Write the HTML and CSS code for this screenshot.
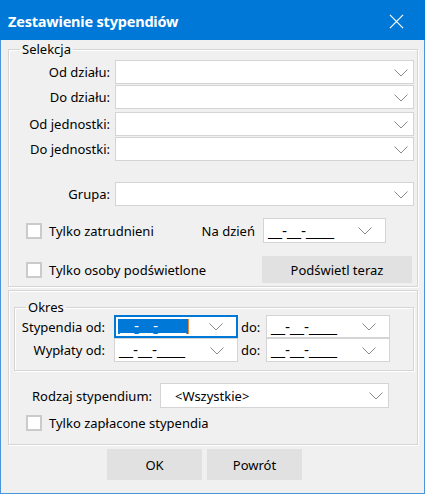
FILE: index.html
```html
<!DOCTYPE html>
<html lang="pl">
<head>
    <meta charset="UTF-8">
    <title>Zestawienie stypendiów</title>
    <link rel="stylesheet" href="styles.css">
</head>
<body>
    <div class="dialog">
        <div class="titlebar">
            <span class="title">Zestawienie stypendiów</span>
            <svg class="close" width="16" height="16" viewBox="0 0 16 16">
                <path d="M1 1 L15 15 M15 1 L1 15" stroke="#fff" stroke-width="1.3" fill="none"/>
            </svg>
        </div>

        <fieldset class="group selekcja">
            <legend>Selekcja</legend>
            <div class="row r1">
                <span class="lbl">Od działu:</span>
                <div class="combo wide"><span></span><svg class="arrow" width="14" height="8" viewBox="0 0 14 8"><path d="M0.5 0.5 L7 7 L13.5 0.5" stroke="#8a8a8a" fill="none"/></svg></div>
            </div>
            <div class="row r2">
                <span class="lbl">Do działu:</span>
                <div class="combo wide"><span></span><svg class="arrow" width="14" height="8" viewBox="0 0 14 8"><path d="M0.5 0.5 L7 7 L13.5 0.5" stroke="#8a8a8a" fill="none"/></svg></div>
            </div>
            <div class="row r3">
                <span class="lbl">Od jednostki:</span>
                <div class="combo wide"><span></span><svg class="arrow" width="14" height="8" viewBox="0 0 14 8"><path d="M0.5 0.5 L7 7 L13.5 0.5" stroke="#8a8a8a" fill="none"/></svg></div>
            </div>
            <div class="row r2">
                <span class="lbl">Do jednostki:</span>
                <div class="combo wide"><span></span><svg class="arrow" width="14" height="8" viewBox="0 0 14 8"><path d="M0.5 0.5 L7 7 L13.5 0.5" stroke="#8a8a8a" fill="none"/></svg></div>
            </div>
            <div class="row r5">
                <span class="lbl">Grupa:</span>
                <div class="combo wide"><span></span><svg class="arrow" width="14" height="8" viewBox="0 0 14 8"><path d="M0.5 0.5 L7 7 L13.5 0.5" stroke="#8a8a8a" fill="none"/></svg></div>
            </div>
            <div class="check-row cr1">
                <label class="check"><span class="box"></span>Tylko zatrudnieni</label>
                <span class="na-dzien">Na dzień</span>
                <div class="combo date nd"><span class="mask">__-__-____</span><svg class="arrow" width="14" height="8" viewBox="0 0 14 8"><path d="M0.5 0.5 L7 7 L13.5 0.5" stroke="#8a8a8a" fill="none"/></svg></div>
            </div>
            <div class="check-row cr2">
                <label class="check"><span class="box"></span>Tylko osoby podświetlone</label>
                <button class="btn highlight">Podświetl teraz</button>
            </div>
        </fieldset>

        <div class="group lower">
            <fieldset class="group okres">
                <legend>Okres</legend>
                <div class="orow o1">
                    <span class="olbl">Stypendia od:</span>
                    <div class="combo date focused"><span class="mask sel">__-__-____</span><i class="caret"></i><svg class="arrow" width="14" height="8" viewBox="0 0 14 8"><path d="M0.5 0.5 L7 7 L13.5 0.5" stroke="#8a8a8a" fill="none"/></svg></div>
                    <span class="do">do:</span>
                    <div class="combo date"><span class="mask">__-__-____</span><svg class="arrow" width="14" height="8" viewBox="0 0 14 8"><path d="M0.5 0.5 L7 7 L13.5 0.5" stroke="#8a8a8a" fill="none"/></svg></div>
                </div>
                <div class="orow o2">
                    <span class="olbl">Wypłaty od:</span>
                    <div class="combo date"><span class="mask">__-__-____</span><svg class="arrow" width="14" height="8" viewBox="0 0 14 8"><path d="M0.5 0.5 L7 7 L13.5 0.5" stroke="#8a8a8a" fill="none"/></svg></div>
                    <span class="do">do:</span>
                    <div class="combo date"><span class="mask">__-__-____</span><svg class="arrow" width="14" height="8" viewBox="0 0 14 8"><path d="M0.5 0.5 L7 7 L13.5 0.5" stroke="#8a8a8a" fill="none"/></svg></div>
                </div>
            </fieldset>
            <div class="rodzaj">
                <span class="rlbl">Rodzaj stypendium:</span>
                <div class="combo rcombo"><span>&lt;Wszystkie&gt;</span><svg class="arrow" width="14" height="8" viewBox="0 0 14 8"><path d="M0.5 0.5 L7 7 L13.5 0.5" stroke="#8a8a8a" fill="none"/></svg></div>
            </div>
            <label class="check paid"><span class="box"></span>Tylko zapłacone stypendia</label>
        </div>

        <div class="buttons">
            <button class="btn">OK</button>
            <button class="btn">Powrót</button>
        </div>
    </div>
</body>
</html>
```

FILE: styles.css
```css
body {
    margin: 0;
    font-family: "Noto Sans", "Open Sans", sans-serif;
    font-size: 13px;
    color: #000;
}
.dialog {
    width: 425px;
    height: 494px;
    box-sizing: border-box;
    background-color: #f0f0f0;
    border: 1px solid #4b95dc;
    border-top: none;
}
.titlebar {
    height: 40px;
    margin: 0 -1px;
    background-color: #0078d7;
    color: #fff;
    display: flex;
    align-items: center;
    justify-content: space-between;
    padding: 0 21px 0 8px;
}
.title {
    font-weight: bold;
    font-size: 14.5px;
    letter-spacing: -0.2px;
    margin-top: 1px;
}
.close {
    width: 15px;
    height: 15px;
    margin-top: 2px;
}

.group {
    border: 1px solid #d5d5d5;
    box-shadow: inset 1px 1px 0 #fff, 1px 1px 0 #fff;
    box-sizing: border-box;
}
fieldset.group {
    margin: 0;
    padding: 0;
    min-width: 0;
}
legend {
    padding: 0 2px;
    margin-left: 11px;
    line-height: 16px;
    height: 16px;
}

.selekcja {
    width: 410px;
    margin: 1px 0 0 7px !important;
    padding: 0 0 3px 0 !important;
}
.row {
    display: flex;
    align-items: center;
    height: 24px;
}
.r1 { margin-top: 3px; }
.r2 { margin-top: 1px; }
.r3 { margin-top: 3px; }
.r5 { margin-top: 21px; }
.lbl {
    width: 101px;
    text-align: right;
    margin-right: 5px;
    white-space: nowrap;
}

.combo {
    box-sizing: border-box;
    height: 24px;
    background-color: #fff;
    border: 1px solid #d4d4d4;
    display: flex;
    align-items: center;
    justify-content: space-between;
    padding: 0 5px 0 4px;
    white-space: nowrap;
}
.combo.wide {
    width: 299px;
}
.combo.date {
    padding-right: 13px;
}
.mask {
    font-family: "DejaVu Sans", sans-serif;
    font-size: 14px;
    line-height: 16px;
}
.arrow {
    flex-shrink: 0;
    margin-top: 1px;
}

.check-row {
    display: flex;
    align-items: center;
    padding-left: 17px;
}
.cr1 {
    margin-top: 12px;
    height: 25px;
}
.cr2 {
    margin-top: 13px;
    height: 27px;
}
.check {
    display: flex;
    align-items: center;
    flex: 1;
    white-space: nowrap;
}
.box {
    width: 16px;
    height: 16px;
    box-sizing: border-box;
    border: 2px solid #cbcbcb;
    background-color: #fff;
    margin-right: 7px;
}
.na-dzien {
    margin-right: 8px;
}
.combo.nd {
    width: 123px;
    height: 25px;
    margin-right: 31px;
}
.btn {
    font-family: inherit;
    font-size: 13px;
    color: #000;
    background-color: #e1e1e1;
    border: 1px solid #e1e1e1;
    padding: 0;
}
.highlight {
    width: 150px;
    height: 27px;
    margin-right: 5px;
}

.lower {
    width: 410px;
    margin: 3px 0 0 7px;
    padding: 0 0 13px 0;
}
.okres {
    width: 400px;
    margin: 8px 0 0 5px !important;
    padding: 0 0 8px 0 !important;
}
.orow {
    display: flex;
    align-items: center;
}
.o1 { height: 23px; }
.o2 { height: 24px; margin-top: 0; }
.o1 .combo { height: 23px; }
.olbl {
    width: 90px;
    text-align: right;
    margin-right: 9px;
    white-space: nowrap;
}
.orow .combo {
    width: 124px;
}
.do {
    margin: 0 6px 0 3px;
    width: 19px;
}
.combo.focused {
    border: 2px solid #0078d7;
    padding-left: 2px;
    justify-content: flex-start;
}
.combo.focused .arrow {
    margin-left: auto;
}
.sel {
    background-color: #0078d7;
    color: #fff;
    height: 15px;
    line-height: 15px;
    padding: 0 2px;
}
.caret {
    width: 1px;
    height: 15px;
    background-color: #e8873a;
}

.rodzaj {
    display: flex;
    align-items: center;
    margin: 12px 0 0 23px;
    height: 25px;
}
.rlbl {
    width: 128px;
    white-space: nowrap;
}
.rcombo {
    width: 229px;
    height: 25px;
    padding-left: 14px;
}
.paid {
    margin: 7px 0 0 17px;
    height: 16px;
}

.buttons {
    display: flex;
    gap: 5px;
    margin: 4px 0 0 106px;
}
.buttons .btn {
    width: 95px;
    height: 31px;
}
```
